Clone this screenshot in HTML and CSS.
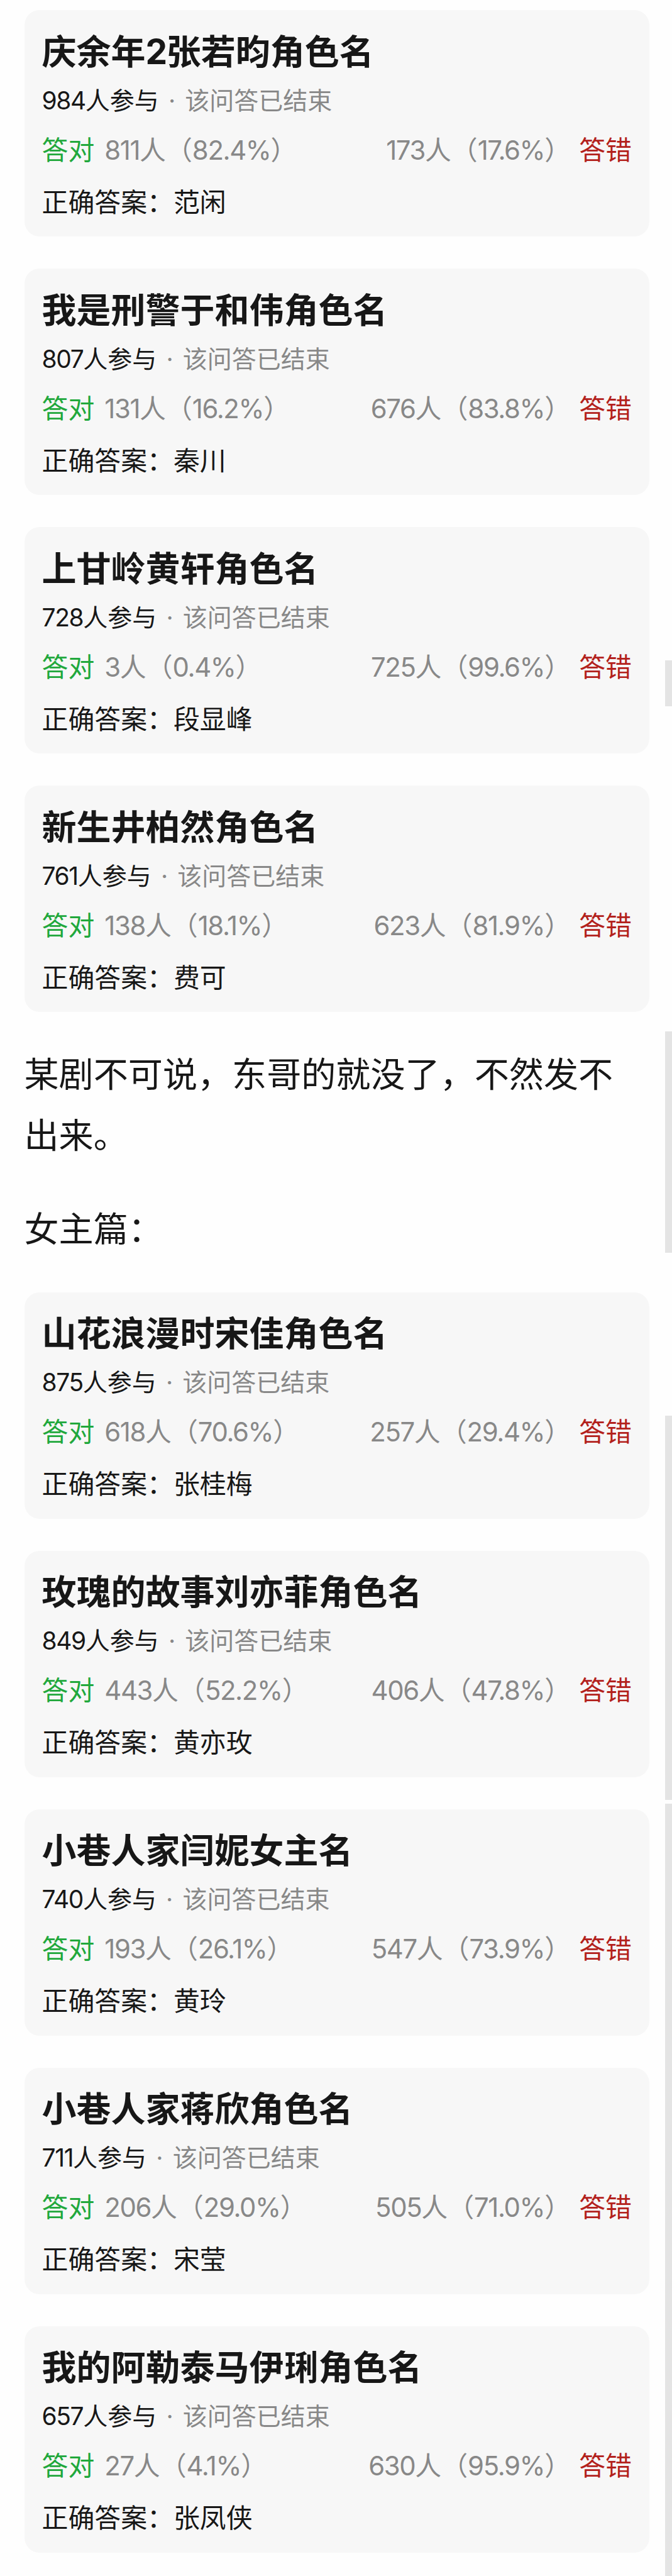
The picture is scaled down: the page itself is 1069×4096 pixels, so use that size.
FILE: index.html
```html
<!DOCTYPE html>
<html lang="zh-CN">
<head>
  <meta charset="UTF-8" />
  <meta name="viewport" content="width=device-width, initial-scale=1.0"/>
  <title>角色名问答</title>
  <link rel="stylesheet" href="styles.css">
</head>
<body>
  <div class="page">
    <!-- 男主篇 -->
    <div class="card">
      <h2>庆余年<span class="num">2</span>张若昀角色名</h2>
      <p class="meta"><span class="num">984</span>人参与<span class="dot">·</span><span class="ended">该问答已结束</span></p>
      <div class="stats">
        <span class="right">答对</span><span class="count"><span class="num">811</span>人（<span class="num">82.4%</span>）</span>
        <span class="count push"><span class="num">173</span>人（<span class="num">17.6%</span>）</span><span class="wrong">答错</span>
      </div>
      <p class="answer">正确答案：范闲</p>
    </div>

    <div class="card">
      <h2>我是刑警于和伟角色名</h2>
      <p class="meta"><span class="num">807</span>人参与<span class="dot">·</span><span class="ended">该问答已结束</span></p>
      <div class="stats">
        <span class="right">答对</span><span class="count"><span class="num">131</span>人（<span class="num">16.2%</span>）</span>
        <span class="count push"><span class="num">676</span>人（<span class="num">83.8%</span>）</span><span class="wrong">答错</span>
      </div>
      <p class="answer">正确答案：秦川</p>
    </div>

    <div class="card">
      <h2>上甘岭黄轩角色名</h2>
      <p class="meta"><span class="num">728</span>人参与<span class="dot">·</span><span class="ended">该问答已结束</span></p>
      <div class="stats">
        <span class="right">答对</span><span class="count"><span class="num">3</span>人（<span class="num">0.4%</span>）</span>
        <span class="count push"><span class="num">725</span>人（<span class="num">99.6%</span>）</span><span class="wrong">答错</span>
      </div>
      <p class="answer">正确答案：段显峰</p>
    </div>

    <div class="card">
      <h2>新生井柏然角色名</h2>
      <p class="meta"><span class="num">761</span>人参与<span class="dot">·</span><span class="ended">该问答已结束</span></p>
      <div class="stats">
        <span class="right">答对</span><span class="count"><span class="num">138</span>人（<span class="num">18.1%</span>）</span>
        <span class="count push"><span class="num">623</span>人（<span class="num">81.9%</span>）</span><span class="wrong">答错</span>
      </div>
      <p class="answer">正确答案：费可</p>
    </div>

    <p class="text">某剧不可说，东哥的就没了，不然发不出来。</p>
    <p class="text">女主篇：</p>

    <!-- 女主篇 -->
    <div class="card">
      <h2>山花浪漫时宋佳角色名</h2>
      <p class="meta"><span class="num">875</span>人参与<span class="dot">·</span><span class="ended">该问答已结束</span></p>
      <div class="stats">
        <span class="right">答对</span><span class="count"><span class="num">618</span>人（<span class="num">70.6%</span>）</span>
        <span class="count push"><span class="num">257</span>人（<span class="num">29.4%</span>）</span><span class="wrong">答错</span>
      </div>
      <p class="answer">正确答案：张桂梅</p>
    </div>

    <div class="card">
      <h2>玫瑰的故事刘亦菲角色名</h2>
      <p class="meta"><span class="num">849</span>人参与<span class="dot">·</span><span class="ended">该问答已结束</span></p>
      <div class="stats">
        <span class="right">答对</span><span class="count"><span class="num">443</span>人（<span class="num">52.2%</span>）</span>
        <span class="count push"><span class="num">406</span>人（<span class="num">47.8%</span>）</span><span class="wrong">答错</span>
      </div>
      <p class="answer">正确答案：黄亦玫</p>
    </div>

    <div class="card">
      <h2>小巷人家闫妮女主名</h2>
      <p class="meta"><span class="num">740</span>人参与<span class="dot">·</span><span class="ended">该问答已结束</span></p>
      <div class="stats">
        <span class="right">答对</span><span class="count"><span class="num">193</span>人（<span class="num">26.1%</span>）</span>
        <span class="count push"><span class="num">547</span>人（<span class="num">73.9%</span>）</span><span class="wrong">答错</span>
      </div>
      <p class="answer">正确答案：黄玲</p>
    </div>

    <div class="card">
      <h2>小巷人家蒋欣角色名</h2>
      <p class="meta"><span class="num">711</span>人参与<span class="dot">·</span><span class="ended">该问答已结束</span></p>
      <div class="stats">
        <span class="right">答对</span><span class="count"><span class="num">206</span>人（<span class="num">29.0%</span>）</span>
        <span class="count push"><span class="num">505</span>人（<span class="num">71.0%</span>）</span><span class="wrong">答错</span>
      </div>
      <p class="answer">正确答案：宋莹</p>
    </div>

    <div class="card">
      <h2>我的阿勒泰马伊琍角色名</h2>
      <p class="meta"><span class="num">657</span>人参与<span class="dot">·</span><span class="ended">该问答已结束</span></p>
      <div class="stats">
        <span class="right">答对</span><span class="count"><span class="num">27</span>人（<span class="num">4.1%</span>）</span>
        <span class="count push"><span class="num">630</span>人（<span class="num">95.9%</span>）</span><span class="wrong">答错</span>
      </div>
      <p class="answer">正确答案：张凤侠</p>
    </div>

    <!-- scroll bar pieces over the right edge -->
    <div class="bar bar1"></div>
    <div class="bar bar2"></div>
    <div class="bar bar3"></div>
    <div class="bar bar4"></div>
  </div>
</body>
</html>
```

FILE: styles.css
```css
* {
  box-sizing: border-box;
}
body {
  margin: 0;
  background: #fefefe;
  color: #171717;
  font-family: Inter, "Noto Sans CJK SC", sans-serif;
}
.page {
  position: relative;
  height: 4096px;
  padding: 16px 36px 0 38.5px;
  overflow: hidden;
}
h2, p {
  margin: 0;
}
.card {
  height: 360px;
  margin-bottom: 51px;
  padding: 28.5px 28px 0;
  background: #f7f7f7;
  border-radius: 24px;
}
.card h2 {
  font-size: 55px;
  line-height: 74px;
  font-weight: 700;
}
.meta {
  font-size: 39px;
  line-height: 81px;
}
.num {
  letter-spacing: -1.4px;
}
.dot {
  display: inline-block;
  width: 41.5px;
  text-align: center;
  color: #888;
}
.ended {
  color: #888;
}
.stats {
  display: flex;
  font-size: 41.9px;
  line-height: 78px;
}
.right {
  margin-right: 16px;
  color: #21a83c;
}
.wrong {
  margin-left: 13px;
  color: #b3211c;
}
.count {
  color: #888;
}
.push {
  margin-left: auto;
}
.answer {
  font-size: 41.9px;
  line-height: 87px;
}
.text {
  margin-bottom: 52.5px;
  padding-right: 24px;
  font-size: 55.1px;
  line-height: 96.5px;
}
.bar {
  position: absolute;
  right: 0;
  width: 11px;
  background: #e4e4e4;
}
.bar1 {
  top: 1050px;
  height: 73px;
}
.bar2 {
  top: 1640px;
  height: 352px;
}
.bar3 {
  top: 2251px;
  height: 611px;
}
.bar4 {
  top: 2868px;
  bottom: 0;
}
```
